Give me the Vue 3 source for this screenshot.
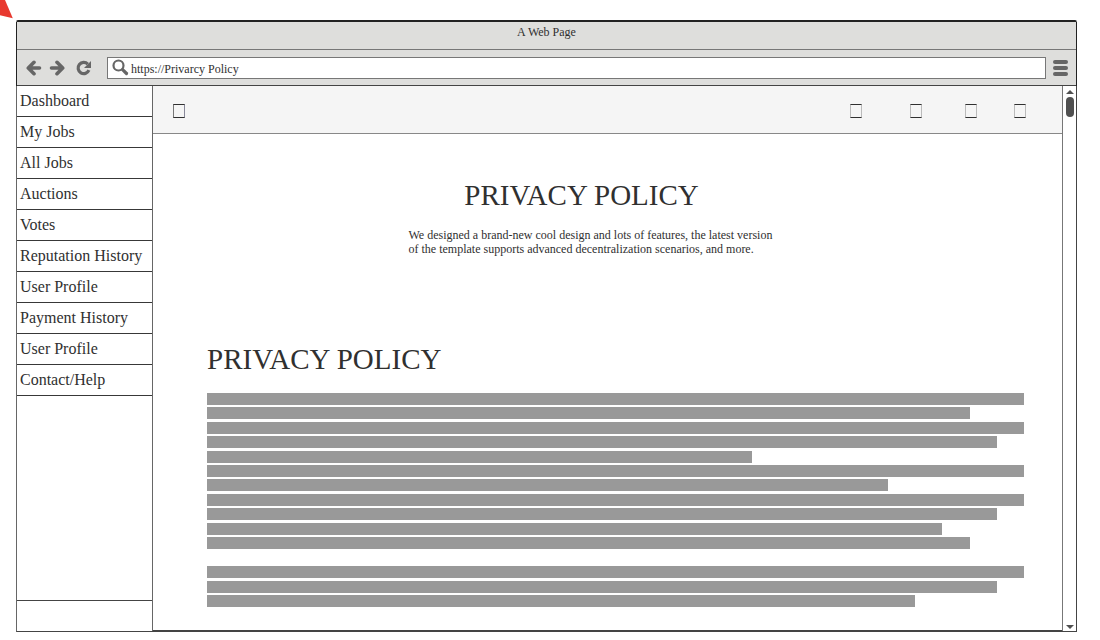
<script setup>
const links = [
  'Dashboard', 'My Jobs', 'All Jobs', 'Auctions', 'Votes',
  'Reputation History', 'User Profile', 'Payment History', 'User Profile', 'Contact/Help',
]
const actions = ['Search', 'Messages', 'Notifications', 'Account']
const paragraphs = [
  { size: 'long', lines: [100, 93.33, 100, 96.67, 66.67, 100, 83.33, 100, 96.67, 90, 93.33] },
  { size: 'short', lines: [100, 96.67, 86.67] },
]
</script>

<template>
  <div class="page">
    <svg class="pointer" width="14" height="20" viewBox="0 0 14 20" aria-hidden="true">
      <path d="M0 0H5L12.800 18.200L0 15.200Z" fill="#e8392f" />
    </svg>
    <div class="window">
      <header class="chrome">
        <div class="title">A Web Page</div>
        <div class="toolbar">
          <div class="controls">
            <button type="button" aria-label="Back">
              <svg width="16" height="16" viewBox="0 0 16 16"><path d="M13.500 8H3M8 2.300L2.300 8L8 13.700" /></svg>
            </button>
            <button type="button" aria-label="Forward">
              <svg width="16" height="16" viewBox="0 0 16 16"><path d="M2.500 8H13M8 2.300L13.700 8L8 13.700" /></svg>
            </button>
            <button type="button" aria-label="Reload" class="reload">
              <svg width="16" height="16" viewBox="0 0 16 16">
                <path class="ring" d="M11.800 4.200A5.600 5.600 0 1 0 12.900 10.200" />
                <path class="tip" d="M15 1V8H8Z" />
              </svg>
            </button>
          </div>
          <label class="address">
            <svg width="17" height="17" viewBox="0 0 17 17" aria-hidden="true">
              <circle cx="6.500" cy="6.500" r="5" />
              <path d="M10.600 10.600L14.500 14.500" />
            </svg>
            <input type="text" value="https://Privarcy Policy" aria-label="Address" />
          </label>
          <button type="button" class="menu" aria-label="Menu"><i></i><i></i><i></i></button>
        </div>
      </header>
      <div class="body">
        <nav class="sidebar">
          <a v-for="(link, i) in links" :key="i" href="#">{{ link }}</a>
          <div class="foot"></div>
        </nav>
        <main class="content">
          <div class="topbar">
            <button type="button" class="glyph first" aria-label="Toggle sidebar"></button>
            <div class="actions">
              <button v-for="a in actions" :key="a" type="button" class="glyph" :aria-label="a"></button>
            </div>
          </div>
          <section class="hero">
            <h1>PRIVACY POLICY</h1>
            <p>We designed a brand-new cool design and lots of features, the latest version of the template supports advanced decentralization scenarios, and more.</p>
          </section>
          <article class="policy">
            <h2>PRIVACY POLICY</h2>
            <div v-for="p in paragraphs" :key="p.size" class="lines" :class="p.size">
              <div v-for="(w, i) in p.lines" :key="i" class="bar" :style="{ width: w + '%' }"></div>
            </div>
          </article>
        </main>
        <div class="scroll" aria-hidden="true">
          <svg width="8" height="4" viewBox="0 0 8 4"><path d="M4 0L8 4H0Z" /></svg>
          <span class="thumb"></span>
          <svg class="down" width="8" height="4" viewBox="0 0 8 4"><path d="M0 0H8L4 4Z" /></svg>
        </div>
      </div>
    </div>
  </div>
</template>

<style>
html, body { margin: 0; background: #fff; }
</style>

<style scoped>
* { box-sizing: border-box; }
.page {
  display: flex;
  min-height: 100vh;
  padding: 20px 23px 8px 16px;
  font-family: "Liberation Serif", "Times New Roman", serif;
  color: #303030;
}
.pointer { position: absolute; left: 0; top: 0; }
button { padding: 0; border: 0; background: none; font: inherit; color: inherit; }
.window {
  flex: 1;
  display: flex;
  flex-direction: column;
  border: 1px solid #444;
  border-left-color: #666;
  border-top: 2px solid #222;
  border-radius: 2px 2px 0 0;
}
.chrome { background: #dededc; border: solid #222; border-width: 0 1px; margin-right: -1px; margin-left: -1px; }
.title {
  height: 28px;
  border-bottom: 1px solid #777;
  font-size: 12px;
  line-height: 21px;
  text-align: center;
}
.toolbar {
  display: flex;
  align-items: center;
  height: 36px;
  border-bottom: 1px solid #444;
  padding: 0 8px 0 9px;
}
.controls { display: flex; width: 81px; gap: 7px; }
.controls button, .controls svg { display: block; }
.controls .reload { margin-left: 4px; }
.controls path { fill: none; stroke: #666; stroke-width: 3.6; stroke-linecap: round; stroke-linejoin: round; }
.controls .ring { stroke-width: 3.2; stroke-linecap: butt; }
.controls .tip { fill: #666; stroke: none; }
.address {
  flex: 1;
  display: flex;
  align-items: center;
  height: 22px;
  padding-left: 4px;
  background: #fff;
  border: 1px solid #777;
}
.address svg { fill: none; stroke: #666; stroke-width: 2.2; }
.address path { stroke-width: 3.2; stroke-linecap: round; }
.address input {
  flex: 1;
  min-width: 0;
  margin-left: 2px;
  padding: 2px 0 0;
  border: 0;
  outline: 0;
  background: none;
  font: inherit;
  font-size: 12px;
  line-height: 16px;
  color: inherit;
}
.menu { display: grid; gap: 2px; width: 15px; margin-left: 7px; }
.menu i { height: 4px; border-radius: 2px; background: #666; }
.body { flex: 1; display: flex; }
.sidebar {
  display: flex;
  flex-direction: column;
  width: 136px;
  border-right: 1px solid #666;
}
.sidebar a {
  height: 31px;
  padding-left: 3px;
  border-bottom: 1px solid #383838;
  font-size: 16px;
  line-height: 29px;
  color: inherit;
  text-decoration: none;
  white-space: nowrap;
}
.foot { height: 31px; margin-top: auto; border-top: 1px solid #444; }
.content { flex: 1; border-bottom: 1px solid #444; }
.topbar {
  display: flex;
  align-items: center;
  justify-content: space-between;
  height: 48px;
  padding: 3px 36px 0 20px;
  background: #f5f5f5;
  border-bottom: 1px solid #888;
}
.actions { display: grid; grid-template-columns: 60px 55px 49px 12px; }
.glyph { width: 12px; height: 14px; border: 1px solid #303030; border-left-color: #bbb; border-right-color: #bbb; }
.first { border-left-color: #777; border-right-color: #889; }
h1, h2 { margin: 0; font-weight: 400; font-size: 29px; line-height: 34px; }
.hero { padding: 44px 52px 0 0; }
.hero h1 { text-align: center; }
.hero p {
  width: 390px;
  margin: 16px auto 0;
  padding-left: 22px;
  font-size: 12px;
  line-height: 14px;
}
.policy { padding: 86px 38px 23px 54px; }
.lines { display: flex; flex-direction: column; justify-content: space-between; }
.long { height: 156px; margin-top: 17px; }
.short { height: 41px; margin-top: 17px; }
.bar { height: 12px; background: #999; }
.scroll {
  display: flex;
  flex-direction: column;
  align-items: center;
  width: 14px;
  padding: 4px 0 2px;
  border-left: 1px solid #777;
}
.scroll svg { fill: #505050; }
.thumb { width: 8px; height: 20px; margin-top: 3px; border-radius: 4px; background: #505050; }
.down { margin-top: auto; }
</style>
